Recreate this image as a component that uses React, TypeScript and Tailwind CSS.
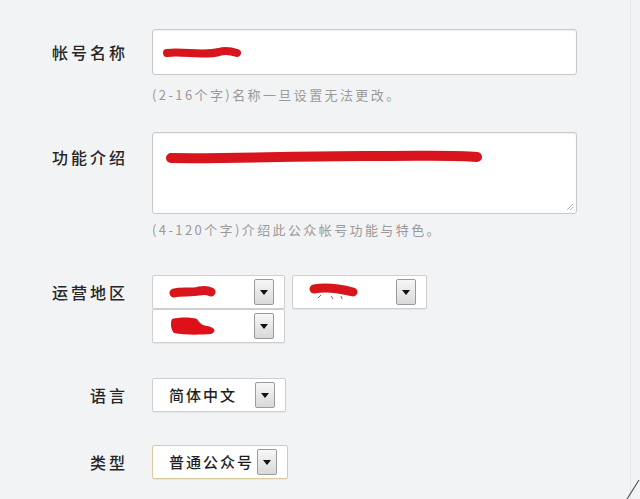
import React from "react";

const font = { fontFamily: '"Noto Sans CJK SC", "Noto Sans", sans-serif' };

function Arrow() {
  return (
    <div className="w-[20px] h-[26px] shrink-0 border border-[#9a9a9a] rounded-[2px] bg-gradient-to-b from-[#f7f7f7] to-[#d9d9d9] flex items-center justify-center">
      <svg width="8" height="5" viewBox="0 0 8 5">
        <path d="M0 0 L8 0 L4 5 Z" fill="#111" />
      </svg>
    </div>
  );
}

function Select({
  children,
  width = "w-[134px]",
  border = "border-[#cfcfcf]",
}: {
  children?: React.ReactNode;
  width?: string;
  border?: string;
}) {
  return (
    <div
      className={`${width} h-[34px] bg-white border ${border} rounded-[2px] shadow-[0_1px_1px_rgba(0,0,0,0.06)] flex items-center pl-[16px] pr-[10px]`}
    >
      <div className="flex-1 min-w-0 overflow-hidden whitespace-nowrap text-[15px] font-medium tracking-[2px] text-[#1e1e1e]">
        {children}
      </div>
      <Arrow />
    </div>
  );
}

function Row({
  label,
  labelClass,
  children,
}: {
  label: string;
  labelClass: string;
  children: React.ReactNode;
}) {
  return (
    <div className="flex">
      <div
        className={`w-[128px] shrink-0 text-right text-[16px] font-medium tracking-[3px] text-[#262626] ${labelClass}`}
      >
        {label}
      </div>
      <div className="ml-[24px] flex-1">{children}</div>
    </div>
  );
}

export default function App() {
  return (
    <div
      className="relative w-[640px] h-[499px] overflow-hidden bg-[#f2f3f5]"
      style={font}
    >
      <div className="w-[631px] h-full border-r border-[#e3e4e6] pt-[29px]">
        {/* 帐号名称 */}
        <Row label="帐号名称" labelClass="leading-[46px]">
          <div className="w-[425px] h-[46px] bg-white border border-[#c9c9c9] rounded-[3px] shadow-[inset_0_1px_2px_rgba(0,0,0,0.06)] flex items-center pl-[10px]">
            <svg width="80" height="16" viewBox="0 0 80 16">
              <path
                d="M4 9 C20 7 40 12 56 8 C62 6 68 7 74 9"
                stroke="#d8141c"
                strokeWidth="8"
                strokeLinecap="round"
                fill="none"
              />
            </svg>
          </div>
          <div className="mt-[12px] text-[13px] leading-[16px] tracking-[2.4px] text-[#9a9a9a]">
            (2-16个字)名称一旦设置无法更改。
          </div>
        </Row>

        {/* 功能介绍 */}
        <div className="mt-[29px]">
          <Row label="功能介绍" labelClass="leading-[34px] pt-[8px]">
            <div className="relative w-[425px] h-[82px] bg-white border border-[#c9c9c9] rounded-[3px] shadow-[inset_0_1px_2px_rgba(0,0,0,0.06)] pl-[12px] pt-[16px]">
              <svg width="320" height="16" viewBox="0 0 320 16">
                <path
                  d="M6 9 C80 10 150 6 220 7 C260 7 290 6 312 8"
                  stroke="#d8141c"
                  strokeWidth="10"
                  strokeLinecap="round"
                  fill="none"
                />
              </svg>
              <svg
                className="absolute right-[2px] bottom-[2px]"
                width="8"
                height="8"
                viewBox="0 0 8 8"
              >
                <path d="M7 1 L1 7 M7 4 L4 7" stroke="#b5b5b5" strokeWidth="1" />
              </svg>
            </div>
            <div className="mt-[8px] text-[13px] leading-[16px] tracking-[2.4px] text-[#9a9a9a]">
              (4-120个字)介绍此公众帐号功能与特色。
            </div>
          </Row>
        </div>

        {/* 运营地区 */}
        <div className="mt-[37px]">
          <Row label="运营地区" labelClass="leading-[34px]">
            <div className="w-[282px] flex flex-wrap gap-x-[7px]">
              <Select width="w-[133px]">
                <svg width="48" height="14" viewBox="0 0 48 14" className="block">
                  <path
                    d="M5 8 C12 6 22 8 30 6 C36 5 40 6 42 7"
                    stroke="#d8141c"
                    strokeWidth="9"
                    strokeLinecap="round"
                    fill="none"
                  />
                </svg>
              </Select>
              <Select width="w-[135px]">
                <svg width="56" height="18" viewBox="0 0 56 18" className="block">
                  <path
                    d="M5 6 C16 4 32 6 44 9"
                    stroke="#d8141c"
                    strokeWidth="9"
                    strokeLinecap="round"
                    fill="none"
                  />
                  <path d="M12 12 L9 15 M22 13 L24 16 M32 13 L33 16" stroke="#9a6060" strokeWidth="1" />
                </svg>
              </Select>
              <Select width="w-[133px]">
                <svg width="52" height="20" viewBox="0 0 52 20" className="block">
                  <path
                    d="M3 3 C10 1 22 1 28 3 C30 6 32 9 38 10 C46 11 48 16 42 18 C30 19 14 19 5 17 C2 14 1 7 3 3 Z"
                    fill="#e0101a"
                  />
                </svg>
              </Select>
            </div>
          </Row>
        </div>

        {/* 语言 */}
        <div className="mt-[35px]">
          <Row label="语言" labelClass="leading-[34px]">
            <Select width="w-[134px]">简体中文</Select>
          </Row>
        </div>

        {/* 类型 */}
        <div className="mt-[33px]">
          <Row label="类型" labelClass="leading-[34px]">
            <Select width="w-[136px]" border="border-[#dccb9c]">
              普通公众号
            </Select>
          </Row>
        </div>
      </div>

      <svg
        className="absolute right-0 bottom-0"
        width="14"
        height="20"
        viewBox="0 0 14 20"
      >
        <path d="M13 1 L1 20" stroke="#555" strokeWidth="1.2" />
      </svg>
    </div>
  );
}
